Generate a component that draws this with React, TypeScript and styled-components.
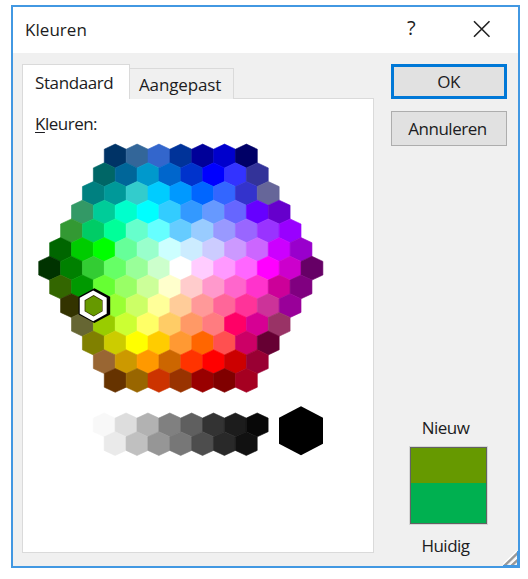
import React from "react";
import styled, { createGlobalStyle } from "styled-components";

const GlobalStyle = createGlobalStyle`
  * { box-sizing: border-box; }
  body { margin: 0; background: #fff; overflow: hidden; }
`;

const Screen = styled.div`
  width: 528px;
  height: 579px;
  padding: 5px 0 0 11px;
  font-family: "Open Sans", "Noto Sans", sans-serif;
  font-size: 17px;
  line-height: 24px;
  color: #1c1c22;
`;

const Dialog = styled.div`
  width: 509px;
  height: 563px;
  display: flex;
  flex-direction: column;
  border: 2px solid #4298e2;
  background: #fff;
`;

const TitleBar = styled.header`
  height: 46px;
  flex: none;
  display: flex;
  padding: 11px 0 0 12px;
`;

const Label = styled.span<{ $spacing?: number; $size?: number; $weight?: number }>`
  display: inline-block;
  white-space: nowrap;
  letter-spacing: ${(p) => p.$spacing ?? -0.5}px;
  font-size: ${(p) => p.$size ?? 17}px;
  font-weight: ${(p) => p.$weight ?? 400};
`;

const Title = styled.div`
  width: 382px;
`;

const HelpMark = styled.div`
  width: 66px;
  margin-top: -2px;
`;

const CloseIcon = styled.svg`
  display: block;
  margin-top: 2px;
`;

const Body = styled.div`
  flex: 1;
  display: flex;
  background: #f0f0f0;
  padding: 11px 0 0 9px;
`;

const Tabs = styled.section`
  width: 352px;
  height: 489px;
  display: flex;
  flex-direction: column;
`;

const TabList = styled.div`
  display: flex;
  align-items: flex-end;
  height: 35px;
`;

const Tab = styled.button<{ $active?: boolean }>`
  width: ${(p) => (p.$active ? 108 : 104)}px;
  height: ${(p) => (p.$active ? 35 : 31)}px;
  margin: 0;
  padding: ${(p) => (p.$active ? "6px 0 0 12px" : "4px 0 0 9px")};
  border: 1px solid #dadada;
  border-width: ${(p) => (p.$active ? "1px 1px 0" : "1px 1px 0 0")};
  background: ${(p) => (p.$active ? "#fff" : "#f0f0f0")};
  font: inherit;
  color: inherit;
  display: flex;
  align-items: flex-start;
  position: relative;
  z-index: ${(p) => (p.$active ? 1 : 0)};
`;

const Panel = styled.div`
  flex: 1;
  margin-top: -1px;
  border: 1px solid #dadada;
  background: #fff;
  padding: 13px 0 0 12px;
`;

const AccessKey = styled.span`
  text-decoration: underline;
  text-decoration-thickness: 1px;
  text-underline-offset: 2px;
`;

const Palette = styled.svg`
  display: block;
  margin: 3px 0 0 -3px;
`;

const Side = styled.aside`
  flex: 1;
  display: flex;
  flex-direction: column;
  padding-left: 17px;
`;

const Button = styled.button<{ $primary?: boolean }>`
  width: 116px;
  height: 35px;
  margin: 0 0 12px;
  padding: ${(p) => (p.$primary ? "0 1px 0 0" : "0 3px 0 0")};
  border: ${(p) => (p.$primary ? "3px solid #0078d7" : "1px solid #adadad")};
  background: #e1e1e1;
  font: inherit;
  color: inherit;
  line-height: 24px;
`;

const Preview = styled.div`
  margin-top: 258px;
  width: 109px;
  display: flex;
  flex-direction: column;
  align-items: center;
`;

const Swatches = styled.div`
  width: 77px;
  height: 77px;
  margin: 7px 0 10px 5px;
  border: 1px solid #626262;
  outline: 1px solid rgba(98, 98, 98, 0.18);
  display: flex;
  flex-direction: column;
`;

const Swatch = styled.div<{ $color: string; $height: number }>`
  height: ${(p) => p.$height}px;
  background: ${(p) => p.$color};
`;

const ResizeGrip = styled.svg`
  position: absolute;
  left: 503px;
  top: 551px;
`;

const COLOR_ROWS = [
  "003366 336699 3366cc 003399 000099 0000cc 000066",
  "006666 006699 0099cc 0066cc 0033cc 0000ff 3333ff 333399",
  "008080 009999 33cccc 00ccff 0099ff 0066ff 3366ff 3333cc 666699",
  "339966 00cc99 00ffcc 00ffff 33ccff 3399ff 6699ff 6666ff 6600ff 6600cc",
  "339933 00cc66 00ff99 66ffcc 66ffff 66ccff 99ccff 9999ff 9966ff 9933ff 9900ff",
  "006600 00cc00 00ff00 66ff99 99ffcc ccffff ccecff ccccff cc99ff cc66ff cc00ff 9900cc",
  "003300 008000 33cc33 66ff66 99ff99 ccffcc ffffff ffccff ff99ff ff66ff ff00ff cc00cc 660066",
  "336600 009900 66ff33 99ff66 ccff99 ffffcc ffcccc ff99cc ff66cc ff33cc cc0099 800080",
  "333300 669900 99ff33 ccff66 ffff99 ffcc99 ff9999 ff6699 ff3399 cc3399 990099",
  "666633 99cc00 ccff33 ffff66 ffcc66 ff9966 ff7c80 ff0066 d60093 993366",
  "808000 cccc00 ffff00 ffcc00 ff9933 ff6600 ff5050 cc0066 660033",
  "996633 cc9900 ff9900 cc6600 ff3300 ff0000 cc0000 990033",
  "663300 996600 cc3300 993300 990000 800000 a50021",
].map((row) => row.split(" "));

const GRAY_ROWS = [
  "f8f8f8 dddddd b2b2b2 808080 5f5f5f 333333 1c1c1c 080808",
  "eaeaea c0c0c0 969696 777777 4d4d4d 292929 111111",
].map((row) => row.split(" "));

const CELL = 21.86;
const ROW = 18.7;

const hexPoints = (cx: number, cy: number, w: number, h: number, slope: number) =>
  [
    [cx, cy - h / 2],
    [cx + w / 2, cy - h / 2 + slope],
    [cx + w / 2, cy + h / 2 - slope],
    [cx, cy + h / 2],
    [cx - w / 2, cy + h / 2 - slope],
    [cx - w / 2, cy - h / 2 + slope],
  ]
    .map(([x, y]) => x.toFixed(2) + "," + y.toFixed(2))
    .join(" ");

const Hex = ({ cx, cy, color }: { cx: number; cy: number; color: string }) => (
  <polygon
    points={hexPoints(cx, cy, CELL, 23.8, 5.1)}
    fill={"#" + color}
    stroke={"#" + color}
    strokeWidth={0.6}
    strokeLinejoin="round"
  />
);

const ColorPalette = () => (
  <Palette width="300" height="330" viewBox="32 139 300 330">
    {COLOR_ROWS.map((row, r) =>
      row.map((color, c) => (
        <Hex
          key={r + "-" + c}
          cx={180.8 + (c - (row.length - 1) / 2) * CELL}
          cy={156 + r * ROW}
          color={color}
        />
      ))
    )}
    {GRAY_ROWS.map((row, r) =>
      row.map((color, c) => (
        <Hex
          key={"g" + r + "-" + c}
          cx={180.7 + (c - (row.length - 1) / 2) * CELL}
          cy={424.9 + r * ROW}
          color={color}
        />
      ))
    )}
    <polygon points={hexPoints(301, 430.8, 44, 49, 11.5)} fill="#000" />
    <polygon points={hexPoints(94.4, 305.6, 31.6, 34.6, 8.4)} fill="#000" />
    <polygon points={hexPoints(93.2, 305.8, 27, 30.8, 7.4)} fill="#fff" />
    <polygon points={hexPoints(93.6, 305.7, 18, 21.4, 5.2)} fill="#333300" />
    <polygon points={hexPoints(93.7, 305.8, 16.6, 19.8, 4.8)} fill="#669900" />
  </Palette>
);

export default function App() {
  return (
    <Screen>
      <GlobalStyle />
      <Dialog>
        <TitleBar>
          <Title>
            <Label $spacing={0.05}>Kleuren</Label>
          </Title>
          <HelpMark>
            <Label $size={20} $weight={500}>?</Label>
          </HelpMark>
          <CloseIcon width="18" height="18" viewBox="0 0 18 18">
            <path d="M1 1.2 16.5 16.7M16.5 1.2 1 16.7" stroke="#222" strokeWidth="1.6" fill="none" />
          </CloseIcon>
        </TitleBar>
        <Body>
          <Tabs>
            <TabList>
              <Tab $active>
                <Label $spacing={-0.4}>Standaard</Label>
              </Tab>
              <Tab>
                <Label $spacing={-0.15}>Aangepast</Label>
              </Tab>
            </TabList>
            <Panel>
              <Label>
                <AccessKey>K</AccessKey>leuren:
              </Label>
              <ColorPalette />
            </Panel>
          </Tabs>
          <Side>
            <Button $primary>
              <Label>OK</Label>
            </Button>
            <Button>
              <Label>Annuleren</Label>
            </Button>
            <Preview>
              <Label>Nieuw</Label>
              <Swatches>
                <Swatch $color="#669900" $height={35} />
                <Swatch $color="#00b050" $height={40} />
              </Swatches>
              <Label>Huidig</Label>
            </Preview>
          </Side>
        </Body>
      </Dialog>
      <ResizeGrip width="16" height="16" viewBox="0 0 16 16">
        <path d="M0 15.2 15 .8M7.5 15.2 15 8" stroke="#fff" strokeWidth="4" fill="none" />
        <path d="M1 15.2 15 1.6M8 15.2 15 8.6" stroke="#999" strokeWidth="2.4" fill="none" />
        <path d="M0 15H16M15 0V16" stroke="#4298e2" strokeWidth="2" fill="none" />
      </ResizeGrip>
    </Screen>
  );
}
